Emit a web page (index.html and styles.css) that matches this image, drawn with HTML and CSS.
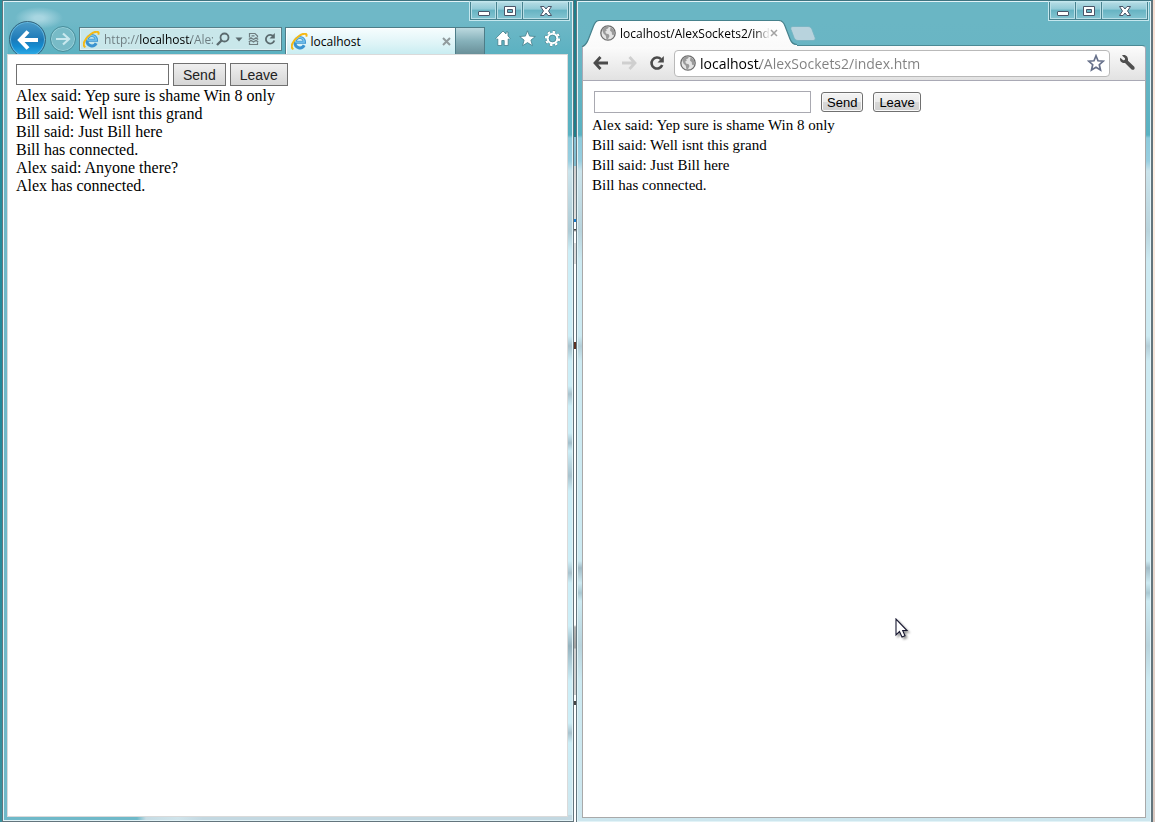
FILE: index.html
```html
<!DOCTYPE html>
<html lang="en">

<head>
    <meta charset="UTF-8">
    <meta name="viewport" content="width=device-width, initial-scale=1.0">
    <title>AlexSockets2</title>
    <link rel="stylesheet" href="styles.css">
</head>

<body>
    <!-- shared icons -->
    <svg class="symbols" width="0" height="0" aria-hidden="true">
        <symbol id="min" viewBox="0 0 14 12">
            <rect x="1.5" y="6.5" width="11" height="4" rx="0.5" fill="#fff" stroke="#4a5568" />
        </symbol>
        <symbol id="max" viewBox="0 0 14 12">
            <path d="M1.5 1.5h11v9h-11zM4.500 4.500v3h5v-3z" fill="#fff" fill-rule="evenodd" stroke="#4a5568" />
        </symbol>
        <symbol id="close" viewBox="0 0 14 12">
            <path d="M1.500 1.500h3.500l2 2.500 2-2.500h3.500l-3 4.500 3 4.500H9L7 8l-2 2.500H1.500l3-4.500z" fill="#fff" stroke="#4a5568" />
        </symbol>
        <symbol id="ie" viewBox="0 0 16 16">
            <path d="M4 8.800h8.700C12.500 2.500 4 2.600 3.700 9c.1 5.800 6.600 6.500 8.700 2.600" fill="none" stroke="#3a93d0" stroke-width="2.800" />
            <path d="M4 8.500h8.500C12 3 4.500 3 3.800 8.500" fill="none" stroke="#7cc8f0" stroke-width="1.200" />
            <path d="M2.300 15.200C-1.500 13.500 2 6.500 7.500 2.800c4-2.700 8.500-3.200 6.800.6" fill="none" stroke="#f5b916" stroke-width="1.900" />
        </symbol>
        <symbol id="globe" viewBox="0 0 16 16">
            <circle cx="8" cy="8" r="7.200" fill="#e4e4e4" stroke="#6c6c6c" stroke-width="1.300" />
            <path d="M2 4.500 4.500 2l3-.7 1.300 1.200-1.300 1.300L6 4.500l.8 1.300-1.600.8L6 8.500l2.700.8.8 1.700-1.700 3.500-1.500-.7-.5-3L3.500 8.500z" fill="#9a9a9a" />
            <path d="m10.500 2.200 3 2 1.200 3.300-1.200 3-1.500-1-.3-2.500-1.700-1.200z" fill="#9a9a9a" />
        </symbol>
    </svg>

    <main class="desktop">
        <!-- Internet Explorer -->
        <section class="window ie">
            <div class="captions">
                <div class="caption-buttons">
                    <button aria-label="Minimize"><svg><use href="#min" /></svg></button>
                    <button aria-label="Maximize"><svg><use href="#max" /></svg></button>
                    <button class="close" aria-label="Close"><svg><use href="#close" /></svg></button>
                </div>
            </div>
            <header class="ie-bar">
                <button class="ie-back" aria-label="Back">
                    <svg width="24" height="22" viewBox="0 0 24 22"><path d="M12 2.500 4 11l8 8.500M4.500 11H22" fill="none" stroke="#fff" stroke-width="4" /></svg>
                </button>
                <button class="ie-forward" aria-label="Forward">
                    <svg width="16" height="16" viewBox="0 0 16 16"><path d="m8 2.500 6 5.500-6 5.500M1 8h12.500" fill="none" stroke="#c9e8ee" stroke-width="2.200" /></svg>
                </button>
                <div class="ie-address">
                    <svg width="17" height="17"><use href="#ie" /></svg>
                    <input type="text" value="http://localhost/AlexSockets2/" aria-label="Address">
                    <button aria-label="Search">
                        <svg width="14" height="14" viewBox="0 0 14 14"><circle cx="8.500" cy="5.500" r="4" fill="none" stroke="#5a6a6e" stroke-width="1.800" /><path d="m5.500 8.500-4.500 4.500" stroke="#5a6a6e" stroke-width="2.400" /></svg>
                    </button>
                    <button aria-label="Show address bar history">
                        <svg width="8" height="14" viewBox="0 0 8 14"><path d="M.5 5.500h7L4 9.500z" fill="#5a6a6e" /></svg>
                    </button>
                    <button aria-label="Compatibility view">
                        <svg width="11" height="14" viewBox="0 0 11 14"><path d="M1.500 5.500v-4H7l2.500 2.500v1.500M3.500 3.800h3M.8 7.500 3 5.800l2.500 1.700L8 5.800l2.200 1.700M.8 10 3 8.300 5.500 10 8 8.300l2.200 1.700M1.500 10.500v2h8v-2" fill="none" stroke="#6e7d80" stroke-width="1.200" /></svg>
                    </button>
                    <button aria-label="Refresh">
                        <svg width="12" height="14" viewBox="0 0 12 14"><path d="M9.500 4.500A4.300 4.300 0 1 0 10.300 8.500" fill="none" stroke="#5a6a6e" stroke-width="1.800" /><path d="M10.800 1v5.500H5.500z" fill="#5a6a6e" /></svg>
                    </button>
                </div>
                <div class="ie-tab">
                    <svg width="17" height="17"><use href="#ie" /></svg>
                    <span>localhost</span>
                    <button aria-label="Close tab">
                        <svg width="9" height="9" viewBox="0 0 9 9"><path d="m1 1 7 7m0-7L1 8" stroke="#919b9d" stroke-width="2" /></svg>
                    </button>
                </div>
                <button class="ie-newtab" aria-label="New tab"></button>
                <nav class="ie-tools">
                    <button aria-label="Home">
                        <svg width="16" height="17" viewBox="0 0 16 17"><path d="M8 1 .8 8.300l1.200 1.200.8-.6V15.500h4v-5h2.400v5h4V8.900l.8.6 1.200-1.200-2.200-2.300V2h-2v2z" fill="#fff" stroke="#437f8b" stroke-width=".8" /></svg>
                    </button>
                    <button aria-label="Favorites">
                        <svg width="17" height="17" viewBox="0 0 17 17"><path d="m8.500.8 2.100 5.300 5.700.4-4.400 3.600 1.500 5.600-4.900-3.100-4.900 3.100 1.500-5.600L.7 6.500l5.700-.4z" fill="#fff" stroke="#437f8b" stroke-width=".8" /></svg>
                    </button>
                    <button aria-label="Tools">
                        <svg width="17" height="17" viewBox="0 0 17 17"><circle cx="8.500" cy="8.500" r="6.600" fill="none" stroke="#437f8b" stroke-width="3.200" stroke-dasharray="3 2.180" /><circle cx="8.500" cy="8.500" r="6.600" fill="none" stroke="#fff" stroke-width="2.200" stroke-dasharray="2.600 2.580" /><circle cx="8.500" cy="8.500" r="4.700" fill="none" stroke="#fff" stroke-width="2.200" /><circle cx="8.500" cy="8.500" r="3.400" fill="none" stroke="#437f8b" stroke-width=".7" /></svg>
                    </button>
                </nav>
            </header>
            <div class="page">
                <form class="chat-form" onsubmit="return false">
                    <input type="text" aria-label="Message">
                    <button>Send</button>
                    <button>Leave</button>
                </form>
                <div class="messages">
                    <div>Alex said: Yep sure is shame Win 8 only</div>
                    <div>Bill said: Well isnt this grand</div>
                    <div>Bill said: Just Bill here</div>
                    <div>Bill has connected.</div>
                    <div>Alex said: Anyone there?</div>
                    <div>Alex has connected.</div>
                </div>
            </div>
        </section>

        <!-- Chrome -->
        <section class="window chrome">
            <div class="captions">
                <div class="caption-buttons">
                    <button aria-label="Minimize"><svg><use href="#min" /></svg></button>
                    <button aria-label="Maximize"><svg><use href="#max" /></svg></button>
                    <button class="close" aria-label="Close"><svg><use href="#close" /></svg></button>
                </div>
            </div>
            <div class="tabstrip">
                <div class="chrome-tab">
                    <svg class="tab-shape" width="217" height="27" viewBox="0 0 217 27">
                        <defs>
                            <linearGradient id="tabfill" x2="0" y2="1"><stop offset="0" stop-color="#fff" /><stop offset="1" stop-color="#fafafa" /></linearGradient>
                        </defs>
                        <path d="M1 27c4-2 5-4 6.500-8l5-13c1.500-4 3-5.500 6-5.500h179c3.500 0 5 1.500 6.500 5.500l5 13c1.500 4 3 6 7 6v2z" fill="url(#tabfill)" />
                        <path d="M1 27c4-2 5-4 6.500-8l5-13c1.500-4 3-5.500 6-5.500h179c3.500 0 5 1.500 6.500 5.500l5 13c1.500 4 3 5.500 7 5.500" fill="none" stroke="#47828d" stroke-width="1.200" />
                    </svg>
                    <svg width="16" height="16"><use href="#globe" /></svg>
                    <span>localhost/AlexSockets2/ind</span>
                    <button aria-label="Close tab">
                        <svg width="8" height="8" viewBox="0 0 8 8"><path d="m1 1 6 6m0-6L1 7" stroke="#a2a2a2" stroke-width="1.500" /></svg>
                    </button>
                </div>
                <button class="chrome-newtab" aria-label="New tab">
                    <svg width="26" height="15" viewBox="0 0 26 15"><path d="M3 .5h15c2 0 3 1 4 3l3 8c.7 2-.2 3-2 3H8c-2 0-3-1-4-3L1 3.500C.3 1.500 1 .5 3 .5z" fill="#b8d3dd" stroke="#75b2c0" stroke-width=".8" /></svg>
                </button>
            </div>
            <header class="chrome-bar">
                <button aria-label="Back">
                    <svg width="16" height="14" viewBox="0 0 16 14"><path d="M7.500 1 2 7l5.500 6M2.500 7H15" fill="none" stroke="#4b4b4b" stroke-width="2.800" /></svg>
                </button>
                <button aria-label="Forward">
                    <svg width="16" height="14" viewBox="0 0 16 14"><path d="M8.500 1 14 7l-5.500 6M13.500 7H1" fill="none" stroke="#cfcfcf" stroke-width="2.800" /></svg>
                </button>
                <button aria-label="Reload">
                    <svg width="16" height="16" viewBox="0 0 16 16"><path d="M12 4.200A5.500 5.500 0 1 0 13.200 10" fill="none" stroke="#4b4b4b" stroke-width="2.600" /><path d="M14.800 1v6.500H8.500z" fill="#4b4b4b" /></svg>
                </button>
                <div class="omnibox">
                    <svg width="16" height="16"><use href="#globe" /></svg>
                    <input type="text" value="localhost/AlexSockets2/index.htm" aria-label="Address">
                    <button aria-label="Bookmark this page">
                        <svg width="18" height="18" viewBox="0 0 18 18"><path d="m9 1.800 2 5 5.300.4-4 3.500 1.200 5.300L9 13.200 4.500 16l1.200-5.300-4-3.500L7 6.800z" fill="#fff" stroke="#66708a" stroke-width="1.700" /></svg>
                    </button>
                </div>
                <button aria-label="Settings">
                    <svg width="18" height="18" viewBox="0 0 18 18"><path d="M3 1.500 6 4.300 5.800 6 4.200 6.300 1.300 3.800C.3 7 2.500 9.500 6 9l6.300 6.300c2 1.600 4.300-.5 3-2.600L9 6.700c.5-4-2.500-6.700-6-5.200z" fill="#4f4f4f" /></svg>
                </button>
            </header>
            <div class="page">
                <form class="chat-form" onsubmit="return false">
                    <input type="text" aria-label="Message">
                    <button>Send</button>
                    <button>Leave</button>
                </form>
                <div class="messages">
                    <div>Alex said: Yep sure is shame Win 8 only</div>
                    <div>Bill said: Well isnt this grand</div>
                    <div>Bill said: Just Bill here</div>
                    <div>Bill has connected.</div>
                </div>
                <!-- mouse pointer -->
                <svg class="pointer" width="16" height="22" viewBox="0 0 16 22"><path d="M1 1v16l3.500-3.500 2.500 5.500 3-1.300L7.700 12.500H12z" fill="#fff" stroke="#1a1a33" stroke-width="1.100" /></svg>
            </div>
        </section>
    </main>
</body>

</html>
```

FILE: styles.css
```css
* {
    box-sizing: border-box;
}

body {
    margin: 0;
    font-family: "Open Sans", "Noto Sans", sans-serif;
    font-size: 12px;
    color: #000;
}

button {
    display: flex;
    align-items: center;
    justify-content: center;
    padding: 0;
    border: 0;
    background: none;
}

input {
    min-width: 0;
    margin: 0;
    padding: 0;
    border: 0;
    outline: 0;
    background: none;
    font-family: inherit;
}

svg {
    display: block;
    flex-shrink: 0;
}

.symbols {
    position: absolute;
}

.desktop {
    display: grid;
    grid-template-columns: 572fr 577fr;
    gap: 2px;
    height: 100vh;
    padding: 0 2px;
    overflow: hidden;
    /* left edge, right edge, then whatever shows between the windows */
    background:
        linear-gradient(#2a8f9c, #20889a 50%, #3b919d) left / 2px 100% no-repeat,
        linear-gradient(#f6ded2, #fff0e4 20%, #d9c8c0) right / 2px 100% no-repeat,
        linear-gradient(#1d7f8d 137px, #88c3d7 137px, #7fbccf 166px, #d0d0d0 166px, #dedede 219px, #1b7fd0 219px, #1b7fd0 222px, #fff 222px, #fff 229px, #222 229px, #fff 232px, #fff 243px, #dcdcdc 243px, #ddd 264px, #fff 264px, #fff 342px, #5b3020 342px, #5b3020 349px, #fff 349px, #fff 625px, #b5b5b5 627px, #a2a2a2 648px, #d0d0d0 649px, #d0d0d0 695px, #fff 695px, #fff 701px, #444 701px, #444 705px, #fff 705px);
}

.window {
    display: flex;
    flex-direction: column;
    min-width: 0;
    border: 1px solid #63757d;
    border-top-color: #3f7480;
    box-shadow: inset 0 0 0 1px #e2f3f7;
    background:
        linear-gradient(#6ab6c4 20px, #69b5c4 54px, #5ab2c2 134px, #8dcbdc 137px, #98cee0 160px, #cbe4ec 170px, #b9d4dd 230px, #cdeaf2 260px, #cdeaf2 335px, #b4ced8 345px, #cdeaf2 360px, #cdeaf2 560px, #a2bcc7 567px, #cdeaf2 582px, #a9c8d2 592px, #cdeaf2 600px, #b9d4dd 645px, #cdeaf2 680px, #cde6ee);
}

.ie {
    padding: 1px 1px 4px;
    background:
        radial-gradient(ellipse 24px 11px at 36px 17px, #a8d6e1 20%, #a8d6e100),
        linear-gradient(#6fb9c9, #6fb9c9) left / 5px 100% no-repeat,
        linear-gradient(to right, #6fb9c9 134px, #c6dce4 143px, #d0e4eb 175px, #c3d8e1 200px, #c3d8e1) bottom / 100% 6px no-repeat,
        linear-gradient(#6fb8c7 20px, #5bb1c1 54px, #5ab2c2 134px, #8dcbdc 137px, #98cee0 160px, #cbe4ec 170px, #aecbd5 230px, #cdeef7 250px, #cdeef7 335px, #a9c3ce 345px, #cdeef7 360px, #cdeef7 385px, #a9c3ce 393px, #cdeef7 405px, #cdeef7 432px, #a3bfcb 442px, #cdeef7 450px, #a9c3ce 475px, #cdeef7 490px, #cdeef7 560px, #a9c3ce 572px, #cdeef7 582px, #cdeef7 625px, #96b3bf 645px, #cdeef7 680px, #cdeef7 722px, #a9c3ce 732px, #cdeef7 742px, #cde6ee);
}

.chrome {
    padding: 1px 5px 4px;
    border-right-width: 2px;
    border-bottom: 0;
}

/* minimize, maximize, close */
.captions {
    display: flex;
    justify-content: flex-end;
    height: 19px;
}

.ie .captions {
    padding-right: 3px;
}

.chrome .captions {
    margin-right: -2px;
}

.caption-buttons {
    display: flex;
    height: 18px;
    border: 1px solid #47828f;
    border-top: 0;
    box-shadow: 0 0 0 1px #c4e7ee;
}

.caption-buttons button {
    width: 26px;
    border-right: 1px solid #47828f;
    box-shadow: inset 0 0 0 1px #b8dfe7;
    background: linear-gradient(#b5dce4, #93cbd7 40%, #68b4c3 50%, #84c5d2);
}

.caption-buttons .close {
    width: 45px;
    border-right: 0;
}

.caption-buttons svg {
    width: 14px;
    height: 12px;
}

/* IE toolbar */
.ie-bar {
    display: flex;
    align-items: flex-start;
    height: 33px;
    padding-left: 5px;
    overflow: hidden;
}

.ie-back {
    width: 37px;
    height: 37px;
    flex-shrink: 0;
    border: 1px solid #35657d;
    border-radius: 50%;
    box-shadow: inset 0 0 0 1px #62b6dd;
    background: linear-gradient(#4b9bc8, #1d7ab8 50%, #138bd0 70%, #35b2ea);
}

.ie-forward {
    width: 26px;
    height: 26px;
    flex-shrink: 0;
    margin: 5px 3px 0 4px;
    border: 1px solid #498e9b;
    border-radius: 50%;
    box-shadow: inset 0 0 0 1px #98d0da;
    background: #78bbc7;
}

.ie-address {
    display: flex;
    align-items: center;
    flex: 204 1 0;
    min-width: 0;
    height: 24px;
    margin: 6px 3px 0 0;
    padding: 0 5px 0 3px;
    border: 1px solid #56808a;
    box-shadow: inset 0 0 0 1px #dff1f4;
    background: #c9e7ea;
}

/* the host is black, the rest of the address is grey */
.ie-address input {
    flex: 1;
    margin: 0 3px 0 4px;
    font-size: 12px;
    -webkit-text-fill-color: transparent;
    background: linear-gradient(to right, #6d7c80 35px, #000 35px, #000 87px, #6d7c80 87px);
    -webkit-background-clip: text;
    background-clip: text;
}

.ie-address button {
    margin-right: 5px;
}

.ie-address button:last-child {
    margin-right: 0;
}

.ie-tab {
    display: flex;
    align-items: center;
    flex: 170 1 0;
    min-width: 0;
    height: 27px;
    margin-top: 6px;
    padding: 0 4px 0 5px;
    border: 1px solid #4d7d88;
    border-bottom: 0;
    box-shadow: inset 1px 1px 0 #fff;
    background: linear-gradient(#f7fdfe, #def4f7 60%, #c9edf2);
}

.ie-tab span {
    flex: 1;
    margin-left: 3px;
}

.ie-newtab {
    width: 29px;
    height: 27px;
    flex-shrink: 0;
    margin-top: 6px;
    border: 1px solid #4d7d88;
    border-width: 1px 1px 0 0;
    background: linear-gradient(#bcd9df, #86b1ba 50%, #699099);
}

.ie-tools {
    display: flex;
    gap: 8px;
    margin-top: 9px;
    padding: 0 11px 0 10px;
}

/* Chrome tabs and toolbar */
.tabstrip {
    display: flex;
    height: 24px;
}

.chrome-tab {
    position: relative;
    z-index: 1;
    display: flex;
    align-items: center;
    width: 208px;
    height: 24px;
    padding: 0 12px 0 18px;
}

.tab-shape {
    position: absolute;
    left: -1px;
    top: -1px;
    z-index: -1;
}

.chrome-tab span {
    flex: 1;
    min-width: 0;
    margin-left: 4px;
    overflow: hidden;
    white-space: nowrap;
    mask-image: linear-gradient(to right, #000 90%, transparent);
}

.chrome-newtab {
    height: 15px;
    margin-top: 5px;
}

.chrome-bar {
    display: flex;
    align-items: center;
    gap: 12px;
    height: 36px;
    padding: 0 8px 0 10px;
    border: 1px solid #a9a9b5;
    border-top-color: #4b8994;
    border-radius: 0 4px 0 0;
    background: linear-gradient(#fcfcfc, #e2e2e2);
}

.omnibox {
    display: flex;
    align-items: center;
    flex: 1;
    min-width: 0;
    height: 27px;
    margin: 0 -3px;
    padding: 0 4px 0 5px;
    border: 1px solid #b9b9b9;
    border-radius: 4px;
    background: #fff;
}

.omnibox input {
    flex: 1;
    margin-left: 4px;
    font-size: 14px;
    -webkit-text-fill-color: transparent;
    background: linear-gradient(to right, #000 60px, #808080 60px);
    -webkit-background-clip: text;
    background-clip: text;
}

/* chat page */
.page {
    position: relative;
    flex: 1;
    border: 1px solid #dadada;
    background: #fff;
    font-family: "Liberation Serif", "Times New Roman", serif;
}

.ie .page {
    margin: 0 4px 0 3px;
    padding: 8px;
    font-size: 16px;
    line-height: 18px;
}

.chrome .page {
    padding: 10px 9px;
    border-color: #a9a9a9;
    border-top: 0;
    font-size: 15px;
    line-height: 20px;
}

.chat-form {
    display: flex;
    align-items: center;
    gap: 4px;
    margin-bottom: 1px;
}

.chat-form input {
    width: 153px;
    height: 21px;
    border: 1px solid #707070;
    background: #fff;
}

.chat-form button {
    height: 23px;
    padding: 0 9px;
    border: 1px solid #707070;
    background: linear-gradient(#efefef, #d6d6d6);
    font-family: "Liberation Sans", Arial, sans-serif;
    font-size: 14px;
    color: #222;
}

.chrome .chat-form {
    gap: 10px;
    height: 22px;
    margin-bottom: 2px;
    padding-left: 2px;
}

.chrome .chat-form input {
    width: 217px;
    height: 22px;
    border-color: #a9a9b1;
}

.chrome .chat-form button {
    height: 20px;
    padding: 0 5px;
    border-radius: 3px;
    box-shadow: inset 0 0 0 1px #fafafa;
    background: linear-gradient(#f4f4f4, #ebebeb 50%, #d8d8d8 50%, #d0d0d0);
    font-size: 13px;
    color: #000;
}

.pointer {
    position: absolute;
    left: 55.5%;
    top: 73%;
    filter: drop-shadow(2px 2px 1px rgba(0, 0, 0, 0.4));
}
```
